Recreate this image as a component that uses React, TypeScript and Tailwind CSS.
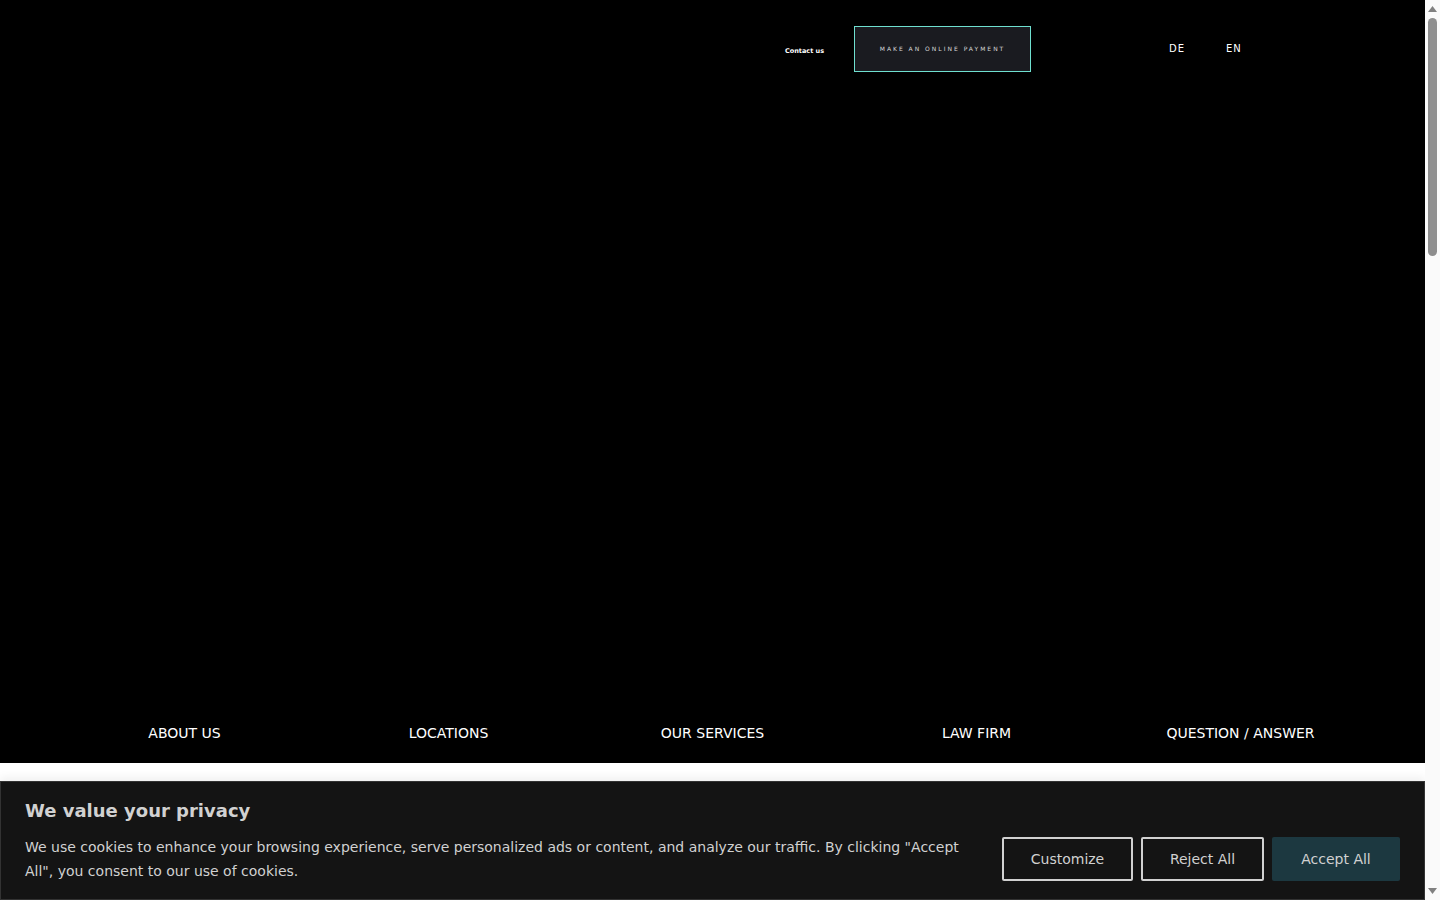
const navItems = ['ABOUT US', 'LOCATIONS', 'OUR SERVICES', 'LAW FIRM', 'QUESTION / ANSWER']

function Header() {
  return (
    <header className="flex items-start pl-[785px] pt-[26px]">
      <a className="mt-[20px] w-[39px] text-[6.5px] leading-[10px] font-bold whitespace-nowrap text-white">Contact us</a>
      <a className="ml-[30px] flex h-[46px] w-[177px] items-center justify-center border border-[#6fe0d0] bg-[#1a1b20] pb-[1px] text-[6px] tracking-[2px] text-[#d8d8d8]">
        MAKE AN ONLINE PAYMENT
      </a>
      <a className="ml-[138px] mt-[16px] text-[10px] leading-[13px] tracking-[1px] text-white">DE</a>
      <a className="ml-[41px] mt-[16px] text-[10px] leading-[13px] tracking-[1px] text-white">EN</a>
    </header>
  )
}

function CookieBanner() {
  return (
    <div className="mt-auto h-[119px] border border-[#333333] bg-[#141414] px-[24px] pt-[17px] shadow-[0_-4px_8px_rgba(0,0,0,0.06)]">
      <div className="text-[18px] leading-[24px] font-bold text-[#d1d1d1]">We value your privacy</div>
      <div className="flex items-start justify-between">
        <p className="mt-[12px] w-[950px] text-[14px] leading-[24px] text-[#d1d1d1]">
          We use cookies to enhance your browsing experience, serve personalized ads or content, and analyze our traffic. By clicking "Accept All", you consent to our use of cookies.
        </p>
        <div className="mt-[14px] flex gap-[8px] text-[14px] text-[#d1d1d1]">
          <button className="h-[44px] w-[131px] rounded-[2px] border-2 border-[#d1d1d1]">Customize</button>
          <button className="h-[44px] w-[123px] rounded-[2px] border-2 border-[#d1d1d1]">Reject All</button>
          <button className="h-[44px] w-[128px] rounded-[2px] bg-[#1c3840]">Accept All</button>
        </div>
      </div>
    </div>
  )
}

function Scrollbar() {
  return (
    <div className="flex w-[15px] flex-col items-center bg-[#fafafa]">
      <svg width="15" height="18" viewBox="0 0 15 18" className="shrink-0">
        <path d="M3 12 L7.5 6 L12 12 Z" fill="#808080" />
      </svg>
      <div className="h-[238px] w-[9px] rounded-[5px] bg-[#8e8e8e]" />
      <svg width="15" height="18" viewBox="0 0 15 18" className="mt-auto shrink-0">
        <path d="M3 6 L7.5 12 L12 6 Z" fill="#808080" />
      </svg>
    </div>
  )
}

export default function App() {
  return (
    <div className="flex h-screen overflow-hidden bg-white font-['DejaVu_Sans',sans-serif]">
      <main className="flex w-[1425px] flex-col overflow-hidden">
        <section className="flex h-[763px] shrink-0 flex-col justify-between bg-black">
          <Header />
          <nav className="mx-auto mb-[20px] grid w-[1320px] grid-cols-5">
            {navItems.map((item) => (
              <a key={item} className="text-center text-[14px] leading-[20px] text-white">{item}</a>
            ))}
          </nav>
        </section>
        <CookieBanner />
      </main>
      <Scrollbar />
    </div>
  )
}
